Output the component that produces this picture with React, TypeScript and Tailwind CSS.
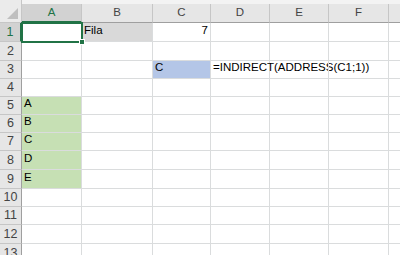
import React from 'react';

const cols = [
  { name: 'A', w: 'w-[60px]' },
  { name: 'B', w: 'w-[71px]' },
  { name: 'C', w: 'w-[58px]' },
  { name: 'D', w: 'w-[59px]' },
  { name: 'E', w: 'w-[59px]' },
  { name: 'F', w: 'w-[60px]' },
  { name: 'G', w: 'w-[80px]' },
];

const rowHeights = ['h-[19px]', 'h-[19px]', 'h-[18px]', 'h-[18px]', 'h-[18px]', 'h-[18px]', 'h-[18px]', 'h-[19px]', 'h-[19px]', 'h-[18px]', 'h-[18px]', 'h-[19px]', 'h-[19px]'];

type Cell = { text?: string; fill?: string; right?: boolean };

const cells: Record<string, Cell> = {
  B1: { text: 'Fila', fill: 'bg-[#d9d9d9]' },
  C1: { text: '7', right: true },
  C3: { text: 'C', fill: 'bg-[#b4c6e7]' },
  D3: { text: '=INDIRECT(ADDRESS(C1;1))' },
  A5: { text: 'A', fill: 'bg-[#c6e0b4]' },
  A6: { text: 'B', fill: 'bg-[#c6e0b4]' },
  A7: { text: 'C', fill: 'bg-[#c6e0b4]' },
  A8: { text: 'D', fill: 'bg-[#c6e0b4]' },
  A9: { text: 'E', fill: 'bg-[#c6e0b4]' },
};

export default function App() {
  return (
    <div className="w-[400px] h-[255px] overflow-hidden bg-white text-[11.5px] text-black" style={{ fontFamily: '"Liberation Sans", Arial, sans-serif' }}>
      {/* header row */}
      <div className="flex h-[23px]">
        <div className="relative w-[22px] shrink-0 bg-[#ebebeb] border-r border-b border-[#c6c6c6]">
          <div className="absolute right-[3px] bottom-[3px] w-0 h-0 border-l-[11px] border-l-transparent border-b-[11px] border-b-[#bfbfbf]" />
        </div>
        <div className="flex flex-col flex-1">
          <div className="h-[5px] bg-[#f3f3f3]" />
          <div className="flex flex-1">
            {cols.map((c, i) => (
              <div
                key={c.name}
                className={`${c.w} shrink-0 flex items-center justify-center border-r border-[#c6c6c6] ${i === 0 ? 'bg-[#d2d2d2] text-[#217346] border-b-2 border-b-[#217346]' : 'bg-[#e6e6e6] text-[#444] border-b border-b-[#9f9f9f]'}`}
              >
                {c.name}
              </div>
            ))}
          </div>
        </div>
      </div>
      {/* body */}
      <div className="relative">
        {rowHeights.map((h, r) => (
          <div key={r} className={`flex ${h}`}>
            <div
              className={`w-[22px] shrink-0 flex items-center justify-center text-[12.5px] border-b border-[#c6c6c6] ${r === 0 ? 'bg-[#d2d2d2] text-[#217346] border-r-2 border-r-[#217346]' : 'bg-[#e6e6e6] text-[#444] border-r border-r-[#9f9f9f]'}`}
            >
              {r + 1}
            </div>
            {cols.map((c) => {
              const cell = cells[`${c.name}${r + 1}`];
              return (
                <div
                  key={c.name}
                  className={`${c.w} shrink-0 flex items-end pb-[2px] px-[2px] whitespace-nowrap border-r border-b border-[#dadcdd] ${cell?.fill ?? ''} ${cell?.right ? 'justify-end' : ''}`}
                >
                  {cell?.text}
                </div>
              );
            })}
          </div>
        ))}
        {/* active cell A1 */}
        <div className="absolute left-[21px] top-[-1px] w-[62px] h-[21px] border-2 border-[#217346]">
          <div className="absolute right-[-4px] bottom-[-4px] w-[6px] h-[6px] bg-[#217346] border border-white" />
        </div>
      </div>
    </div>
  );
}
